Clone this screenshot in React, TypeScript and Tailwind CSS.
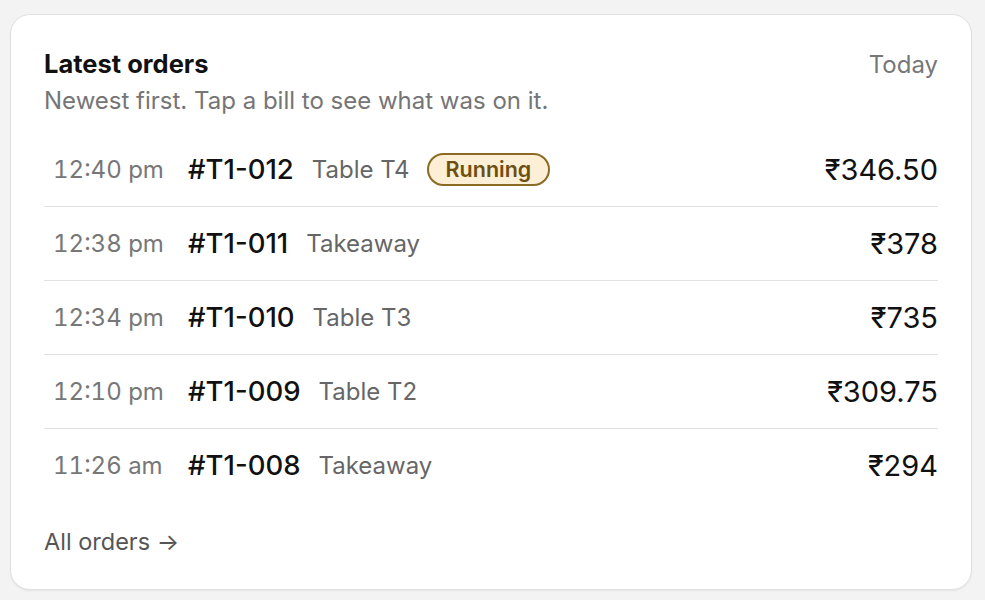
import React from "react";

const orders = [
  { time: "12:40 pm", id: "#T1-012", where: "Table T4", running: true, price: "₹346.50" },
  { time: "12:38 pm", id: "#T1-011", where: "Takeaway", running: false, price: "₹378" },
  { time: "12:34 pm", id: "#T1-010", where: "Table T3", running: false, price: "₹735" },
  { time: "12:10 pm", id: "#T1-009", where: "Table T2", running: false, price: "₹309.75" },
  { time: "11:26 am", id: "#T1-008", where: "Takeaway", running: false, price: "₹294" },
];

export default function App() {
  return (
    <div
      className="h-[600px] w-[985px] bg-[#f3f3f3] pl-[10px] pt-[14px]"
      style={{ fontFamily: "Inter, 'Noto Sans', sans-serif" }}
    >
      <div className="box-border flex h-[576px] w-[962px] flex-col rounded-[20px] border border-[#e0e0e0] bg-white px-[33px] pt-[34px] shadow-[0_1px_2px_rgba(0,0,0,0.06)]">
        <div className="flex items-start justify-between">
          <div>
            <div className="text-[25.5px] font-bold leading-[30px] text-[#111111]">Latest orders</div>
            <div className="mt-[7px] text-[24px] leading-[30px] text-[#757575]">
              Newest first. Tap a bill to see what was on it.
            </div>
          </div>
          <div className="pt-[1px] text-[24px] leading-[30px] text-[#777777]">Today</div>
        </div>
        <div className="mt-[17px] flex flex-col">
          {orders.map((o, i) => (
            <div
              key={o.id}
              className={
                "flex h-[74px] items-center " +
                (i < orders.length - 1 ? "border-b border-[#e2e2e2]" : "")
              }
            >
              <div className="box-border w-[144px] shrink-0 pl-[9px] text-[24px] tabular-nums text-[#777777]">{o.time}</div>
              <div className="text-[27.5px] font-medium text-[#111111]">{o.id}</div>
              <div className="ml-[18px] text-[24px] text-[#666666]">{o.where}</div>
              {o.running && (
                <div className="ml-[17px] box-border flex h-[33px] items-center rounded-full border-2 border-[#8b6a23] bg-[#fcefd6] px-[17px] text-[21.5px] font-semibold text-[#6e4f10]">
                  Running
                </div>
              )}
              <div className="ml-auto text-[29px] text-[#111111]">{o.price}</div>
            </div>
          ))}
        </div>
        <div className="mt-[24px] text-[23.5px] leading-[30px] text-[#555555]">All orders →</div>
      </div>
    </div>
  );
}
